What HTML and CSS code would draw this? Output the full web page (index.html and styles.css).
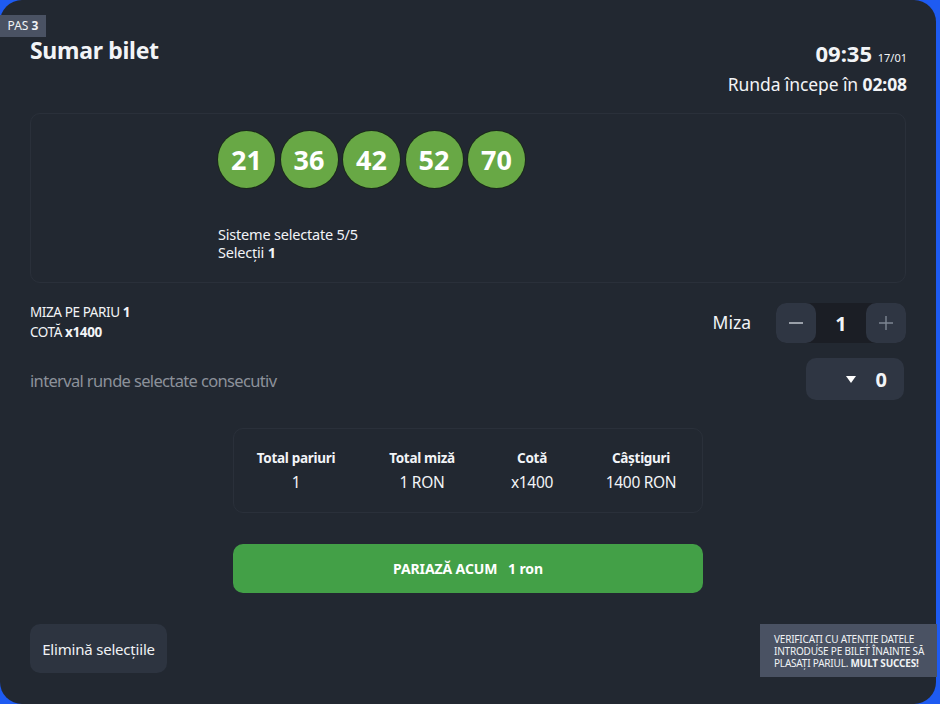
FILE: index.html
```html
<!DOCTYPE html>
<html lang="ro">
<head>
<meta charset="utf-8">
<link rel="stylesheet" href="styles.css">
</head>
<body>
<div class="panel">
  <div class="badge">PAS <b>3</b></div>
  <header class="head">
    <h1 class="title">Sumar bilet</h1>
    <div class="clock">
      <div class="time"><b>09:35</b> <span class="date">17/01</span></div>
      <div class="round">Runda începe în <b>02:08</b></div>
    </div>
  </header>

  <section class="selbox">
    <div class="balls">
      <span class="ball">21</span><span class="ball">36</span><span class="ball">42</span><span class="ball">52</span><span class="ball">70</span>
    </div>
    <div class="selinfo">
      <div>Sisteme selectate 5/5</div>
      <div>Selecții <b>1</b></div>
    </div>
  </section>

  <section class="stake">
    <div class="stake-row">
      <div class="stake-info">
        <div>MIZA PE PARIU <b>1</b></div>
        <div>COTĂ <b>x1400</b></div>
      </div>
      <div class="miza">
        <span class="miza-label">Miza</span>
        <div class="stepper">
          <span class="step-btn">
            <svg width="14" height="14" viewBox="0 0 14 14"><path d="M0 7h14" stroke="#c9ced6" stroke-width="1.4"/></svg>
          </span>
          <span class="step-val">1</span>
          <span class="step-btn">
            <svg width="14" height="14" viewBox="0 0 14 14"><path d="M0 7h14M7 0v14" stroke="#7d8592" stroke-width="1.4"/></svg>
          </span>
        </div>
      </div>
    </div>
    <div class="stake-row interval">
      <div class="interval-label">interval runde selectate consecutiv</div>
      <div class="dropdown">
        <svg width="10" height="7" viewBox="0 0 10 7"><path d="M0 0h10L5 7z" fill="#fff"/></svg>
        <span class="dd-val">0</span>
      </div>
    </div>
  </section>

  <section class="totals">
    <div class="tcol"><div class="th">Total pariuri</div><div class="tv">1</div></div>
    <div class="tcol"><div class="th">Total miză</div><div class="tv">1 RON</div></div>
    <div class="tcol"><div class="th">Cotă</div><div class="tv">x1400</div></div>
    <div class="tcol"><div class="th">Câștiguri</div><div class="tv">1400 RON</div></div>
  </section>

  <button class="bet">PARIAZĂ ACUM &nbsp; 1 ron</button>

  <footer class="foot">
    <button class="clear">Elimină selecțiile</button>
    <div class="notice">VERIFICAȚI CU ATENȚIE DATELE INTRODUSE PE BILET ÎNAINTE SĂ PLASAȚI PARIUL. <b>MULT SUCCES!</b></div>
  </footer>
</div>
</body>
</html>
```
FILE: styles.css
```css
* { box-sizing: border-box; }
html, body { margin: 0; padding: 0; }
body {
  width: 940px;
  height: 704px;
  background: #1e5bf2;
  font-family: "Noto Sans", "Open Sans", sans-serif;
  color: #f2f4f7;
  overflow: hidden;
}
.panel {
  position: relative;
  width: 936px;
  height: 704px;
  background: #222831;
  border-radius: 22px;
  padding: 0 30px 0 30px;
  display: flex;
  flex-direction: column;
}
.badge {
  position: absolute;
  left: 0;
  top: 15px;
  width: 46px;
  height: 22px;
  background: #4a5263;
  font-size: 12px;
  line-height: 22px;
  text-align: center;
  color: #f0f2f5;
}
.head {
  display: flex;
  justify-content: space-between;
  align-items: flex-start;
  padding-top: 35px;
  height: 113px;
}
.title {
  margin: 0;
  font-size: 23px;
  font-weight: 700;
  line-height: 30px;
  letter-spacing: -0.3px;
}
.clock {
  text-align: right;
  padding-top: 6px;
  margin-right: -1px;
}
.time { font-size: 22px; line-height: 24px; }
.time .date { font-size: 11px; font-weight: 400; }
.round { font-size: 17.5px; line-height: 22px; margin-top: 3px; letter-spacing: -0.1px; }
.selbox {
  height: 170px;
  border: 1px solid #2a303a;
  border-radius: 10px;
  padding: 17px 0 0 187px;
}
.balls { display: flex; gap: 5.5px; }
.ball {
  width: 57px;
  height: 57px;
  border-radius: 50%;
  background: #68a845;
  box-shadow: 0 0 0 1px #1a2a1a;
  display: flex;
  align-items: center;
  justify-content: center;
  font-size: 27px;
  font-weight: 700;
  color: #fff;
}
.selinfo {
  margin-top: 37px;
  font-size: 14.5px;
  line-height: 18px;
  letter-spacing: -0.2px;
}
.stake { padding-top: 18px; }
.stake-row {
  display: flex;
  justify-content: space-between;
  align-items: center;
}
.stake-info { font-size: 13.5px; line-height: 20px; letter-spacing: -0.4px; }
.miza { display: flex; align-items: center; gap: 25px; }
.miza-label { font-size: 17.5px; letter-spacing: 0; }
.stepper {
  display: flex;
  height: 40px;
  width: 130px;
  background: #1b1e25;
  border-radius: 10px;
  margin-top: 2px;
}
.step-btn {
  width: 40px;
  height: 40px;
  background: #2f3643;
  border-radius: 10px;
  display: flex;
  align-items: center;
  justify-content: center;
}
.step-val {
  flex: 1;
  display: flex;
  align-items: center;
  justify-content: center;
  font-size: 20px;
  font-weight: 700;
}
.interval { margin-top: 15px; }
.interval-label { font-size: 16.5px; color: #8c919a; letter-spacing: -0.65px; padding-top: 3px; }
.dropdown {
  width: 98px;
  height: 42px;
  margin-right: 2px;
  background: #2f3643;
  border-radius: 10px;
  display: flex;
  align-items: center;
  justify-content: flex-end;
  gap: 20px;
  padding-right: 17px;
}
.dd-val { font-size: 20px; font-weight: 700; }
.totals {
  align-self: center;
  margin-top: 28px;
  width: 470px;
  height: 85px;
  border: 1px solid #2a303a;
  border-radius: 10px;
  display: grid;
  grid-template-columns: 124px 128px 92px 126px;
  padding: 20px 0 0 0;
  text-align: center;
}
.th { font-size: 13.5px; font-weight: 700; letter-spacing: -0.3px; line-height: 18px; }
.tv { font-size: 15.5px; margin-top: 5px; letter-spacing: -0.3px; line-height: 20px; }
.bet {
  align-self: center;
  margin-top: 31px;
  width: 470px;
  height: 49px;
  border: 0;
  border-radius: 10px;
  background: #43a047;
  color: #fff;
  font-family: inherit;
  font-size: 14px;
  font-weight: 700;
  letter-spacing: -0.1px;
}
.foot {
  margin-top: 31px;
  display: flex;
  justify-content: space-between;
  align-items: flex-start;
  margin-right: -31px;
}
.clear {
  width: 137px;
  height: 49px;
  border: 0;
  border-radius: 10px;
  background: #2d3440;
  color: #f0f2f5;
  font-family: inherit;
  font-size: 15px;
  letter-spacing: -0.2px;
}
.notice {
  width: 177px;
  height: 53px;
  background: #4a5263;
  font-size: 10px;
  line-height: 12px;
  padding: 9px 6px 0 14px;
  letter-spacing: -0.2px;
  color: #f0f2f5;
}
```
